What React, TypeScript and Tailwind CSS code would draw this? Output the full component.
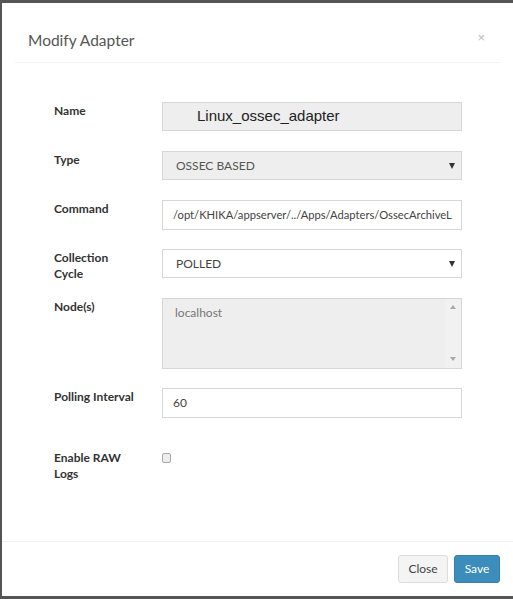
import React from "react";

const labelCls =
  "w-[108px] shrink-0 pt-[1px] text-[12px] leading-[16px] font-bold text-[#333] [font-family:Lato,sans-serif]";
const textCls = "text-[12px] [font-family:Lato,sans-serif]";

function Caret() {
  return (
    <svg width="6" height="6" viewBox="0 0 6 6" className="absolute right-[6px] top-[11px]">
      <path d="M0 0 L6 0 L3 6 Z" fill="#333" />
    </svg>
  );
}

function Row({ label, children, className = "" }: { label: React.ReactNode; children: React.ReactNode; className?: string }) {
  return (
    <div className={"flex items-start " + className}>
      <div className={labelCls}>{label}</div>
      {children}
    </div>
  );
}

export default function App() {
  return (
    <div className="w-[513px] h-[599px] bg-white border-t-[3px] border-l-[2px] border-b-[3px] border-[#555] flex flex-col overflow-hidden">
      <div className="h-[59px] pt-[26px] pl-[26px] pr-[26px] flex justify-between">
        <div className="text-[15.5px] leading-[22px] text-[#555] [font-family:Lato,sans-serif]">Modify Adapter</div>
        <div className="text-[13px] leading-[12px] text-[#bbb] mt-[3px] mr-[2px] [font-family:'Liberation_Sans',sans-serif]">×</div>
      </div>
      <div className="ml-[13px] w-[485px] h-px bg-[#f2f2f2]" />

      <div className="flex-1 pl-[52px] pt-[39px] flex flex-col">
        <Row label="Name" className="h-[29px]">
          <div className="w-[300px] h-[29px] bg-[#eeeeee] border border-[#d6d6d6] pl-[34px] flex items-center text-[15px] text-[#222] [font-family:'Liberation_Sans',sans-serif]">
            Linux_ossec_adapter
          </div>
        </Row>
        <Row label="Type" className="mt-[20px] h-[29px]">
          <div className={"relative w-[300px] h-[29px] bg-[#eeeeee] border border-[#d6d6d6] pl-[13px] flex items-center text-[#555] " + textCls}>
            OSSEC BASED
            <Caret />
          </div>
        </Row>
        <Row label="Command" className="mt-[20px] h-[30px]">
          <div className="w-[300px] h-[30px] bg-white border border-[#d6d6d6] pl-[10px] pr-[9px] flex items-center">
            <div className="w-full overflow-hidden whitespace-nowrap text-[11.2px] text-[#444] [font-family:Lato,sans-serif]">
              /opt/KHIKA/appserver/../Apps/Adapters/OssecArchiveLog
            </div>
          </div>
        </Row>
        <Row label={<>Collection<br />Cycle</>} className="mt-[19px] h-[29px]">
          <div className={"relative w-[300px] h-[29px] bg-white border border-[#d6d6d6] pl-[13px] flex items-center text-[#444] " + textCls}>
            POLLED
            <Caret />
          </div>
        </Row>
        <Row label="Node(s)" className="mt-[20px] h-[71px]">
          <div className="relative w-[300px] h-[71px] bg-[#eeeeee] border border-[#d6d6d6] flex">
            <div className={"flex-1 pl-[12px] pt-[5px] leading-[18px] text-[#777] " + textCls}>localhost</div>
            <div className="w-[16px] h-full bg-[#f1f1f1] relative">
              <svg width="6" height="4" viewBox="0 0 6 4" className="absolute left-[5px] top-[6px]">
                <path d="M0 4 L6 4 L3 0 Z" fill="#a8a8a8" />
              </svg>
              <svg width="6" height="4" viewBox="0 0 6 4" className="absolute left-[5px] bottom-[7px]">
                <path d="M0 0 L6 0 L3 4 Z" fill="#a8a8a8" />
              </svg>
            </div>
          </div>
        </Row>
        <Row label="Polling Interval" className="mt-[19px] h-[30px]">
          <div className={"w-[300px] h-[30px] bg-white border border-[#d6d6d6] pl-[10px] flex items-center text-[#444] " + textCls}>
            60
          </div>
        </Row>
        <Row label={<>Enable RAW<br />Logs</>} className="mt-[31px]">
          <div className="w-[9px] h-[10px] mt-[4px] rounded-[2px] border border-[#a9a9a9] bg-[#ececec]" />
        </Row>
      </div>

      <div className="h-px w-full bg-[#f2f2f2]" />
      <div className="h-[54px] pr-[13px] pt-[13px] flex justify-end gap-[6px]">
        <div className={"w-[50px] h-[28px] rounded-[3px] bg-[#f4f4f4] border border-[#dddddd] flex items-center justify-center text-[#444] " + textCls}>
          Close
        </div>
        <div className={"w-[46px] h-[28px] rounded-[3px] bg-[#3c8dbc] border border-[#367fa9] flex items-center justify-center text-white " + textCls}>
          Save
        </div>
      </div>
    </div>
  );
}
